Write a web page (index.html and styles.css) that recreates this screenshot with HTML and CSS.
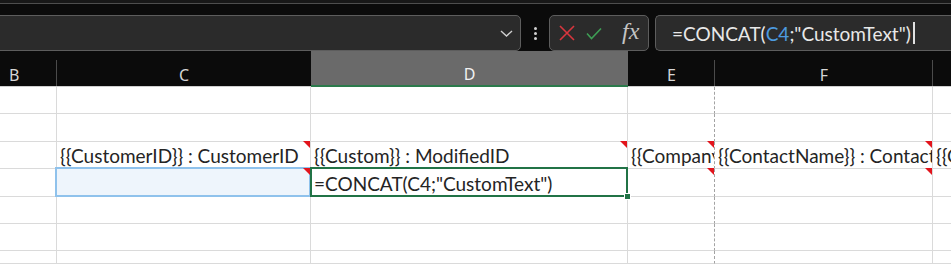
FILE: index.html
```html
<!DOCTYPE html>
<html>
<head>
<meta charset="utf-8">
<link rel="stylesheet" href="styles.css">
</head>
<body>
<div class="topstrip"></div>
<div class="fbar">
  <div class="box namebox">
    <svg class="chev" width="13" height="7" viewBox="0 0 13 7"><path d="M1 1 L6.5 6 L12 1" fill="none" stroke="#cfcfcf" stroke-width="1.4"/></svg>
  </div>
  <div class="more"><i></i><i></i><i></i></div>
  <div class="box btns">
    <svg class="xicon" width="18" height="18" viewBox="0 0 18 18"><path d="M2 2 L16 16 M16 2 L2 16" stroke="#d9363e" stroke-width="1.6" fill="none"/></svg>
    <svg class="ok" width="16" height="13" viewBox="0 0 16 13"><path d="M1 6.5 L5.5 11.5 L15 1.5" stroke="#3e9e55" stroke-width="1.6" fill="none"/></svg>
    <span class="fx">fx</span>
  </div>
  <div class="box formula">=CONCAT(<span class="ref">C4</span>;"CustomText")<span class="caret"></span></div>
</div>
<div class="sheet">
  <div class="h hb">B</div>
  <div class="h hc">C</div>
  <div class="h hd">D</div>
  <div class="h">E</div>
  <div class="h">F</div>
  <div class="h"></div>

  <div class="c"></div><div class="c"></div><div class="c"></div><div class="c ce"></div><div class="c"></div><div class="c"></div>
  <div class="c"></div><div class="c"></div><div class="c"></div><div class="c ce"></div><div class="c"></div><div class="c"></div>

  <div class="c"></div>
  <div class="c note"><span>{{CustomerID}} : CustomerID</span></div>
  <div class="c note"><span>{{Custom}} : ModifiedID</span></div>
  <div class="c ce note"><span>{{CompanyName}} : CompanyName</span></div>
  <div class="c note"><span>{{ContactName}} : ContactName</span></div>
  <div class="c"><span>{{ContactTitle}} : ContactTitle</span></div>

  <div class="c"></div>
  <div class="c note refcell"></div>
  <div class="c sel"><span>=CONCAT(C4;"CustomText")</span></div>
  <div class="c ce note"></div>
  <div class="c note"></div>
  <div class="c"></div>

  <div class="c"></div><div class="c"></div><div class="c"></div><div class="c ce"></div><div class="c"></div><div class="c"></div>
  <div class="c"></div><div class="c"></div><div class="c"></div><div class="c ce"></div><div class="c"></div><div class="c"></div>
  <div class="c"></div><div class="c"></div><div class="c"></div><div class="c ce"></div><div class="c"></div><div class="c"></div>
</div>
</body>
</html>
```
FILE: styles.css
```css
html, body {
  margin: 0;
  padding: 0;
}
body {
  background: #0b0b0b;
  width: 951px;
  height: 264px;
  overflow: hidden;
  font-family: Lato, "Liberation Sans", sans-serif;
}
.topstrip {
  height: 3px;
  background: #181818;
  border-bottom: 1px solid #4e4e4e;
  margin-bottom: 11px;
}
.fbar {
  display: flex;
  height: 36px;
  align-items: stretch;
  white-space: nowrap;
  overflow: hidden;
}
.box {
  background: #2b2b2b;
  border: 1px solid #5d5d5d;
  border-radius: 5px;
  box-sizing: border-box;
  flex: none;
}
.namebox {
  width: 529px;
  margin-left: -8px;
  display: flex;
  align-items: center;
  justify-content: flex-end;
  padding-right: 7px;
}
.chev {
  display: block;
  margin-top: 1px;
}
.more {
  width: 28px;
  flex: none;
  display: flex;
  flex-direction: column;
  align-items: center;
  justify-content: center;
  gap: 2px;
}
.more i {
  display: block;
  width: 3px;
  height: 3px;
  border-radius: 50%;
  background: #d0d0d0;
}
.btns {
  width: 100px;
  display: flex;
  align-items: center;
  padding-left: 8px;
}
.xicon {
  display: block;
}
.ok {
  display: block;
  margin-left: 10px;
}
.fx {
  margin-left: 20px;
  font-family: "Liberation Serif", serif;
  font-style: italic;
  font-size: 24px;
  color: #c4c4c4;
  margin-top: -3px;
}
.formula {
  width: 296px;
  margin-left: 6px;
  padding-left: 16px;
  display: flex;
  align-items: center;
  color: #e8e8e8;
  font-size: 19px;
  border-right: none;
  border-radius: 5px 0 0 5px;
}
.formula .ref {
  color: #4d9be0;
}
.caret {
  display: inline-block;
  width: 2px;
  height: 22px;
  background: #e0e0e0;
  margin-left: 2px;
}
.sheet {
  display: grid;
  grid-template-columns: 57px 254px 317px 87px 218px 200px;
  grid-template-rows: 36px 27px 28px 27px 28px 27px 27px 13px;
  overflow: hidden;
}
.h {
  box-sizing: border-box;
  background-color: #0b0b0b;
  background-image: linear-gradient(#4b4b4b, #4b4b4b);
  background-size: 1px 26px;
  background-position: right bottom;
  background-repeat: no-repeat;
  border-bottom: 1px solid #cfcfcf;
  color: #d6d6d6;
  font-family: "Noto Sans", "Open Sans", sans-serif;
  font-size: 16px;
  display: flex;
  align-items: center;
  justify-content: center;
  padding-top: 12px;
}
.hb {
  justify-content: flex-start;
  padding-left: 9px;
}
.hc {
  background-image: none;
}
.hd {
  background: #6a6a6a;
  color: #f2f2f2;
  border-bottom: 2px solid #2b7a4b;
}
.c {
  position: relative;
  box-sizing: border-box;
  background: #fff;
  border-right: 1px solid #dadada;
  border-bottom: 1px solid #dadada;
  display: flex;
  align-items: flex-end;
  min-width: 0;
  padding: 0 0 1px 3px;
  font-size: 19px;
  line-height: 22px;
  color: #242424;
}
.c span {
  flex: 1;
  min-width: 0;
  overflow: hidden;
  white-space: nowrap;
}
.ce {
  border-right: 1px dashed #a3a3a3;
}
.note::before {
  content: "";
  position: absolute;
  top: -1px;
  right: 0;
  width: 0;
  height: 0;
  border-top: 7px solid #e2141c;
  border-left: 7px solid transparent;
  z-index: 3;
}
.refcell {
  background: #eef5fc;
}
.refcell::after {
  content: "";
  position: absolute;
  left: -2px;
  top: -2px;
  right: -1px;
  bottom: -1px;
  border: 2px solid #8fc2ec;
  z-index: 2;
}
.refcell::before {
  z-index: 4;
}
.sel::after {
  content: "";
  position: absolute;
  left: -1px;
  top: -2px;
  right: -1px;
  bottom: -1px;
  border: 2px solid #217346;
  z-index: 5;
}
.sel::before {
  content: "";
  position: absolute;
  right: -4px;
  bottom: -4px;
  width: 5px;
  height: 5px;
  background: #217346;
  border: 1px solid #fff;
  z-index: 6;
}
```
